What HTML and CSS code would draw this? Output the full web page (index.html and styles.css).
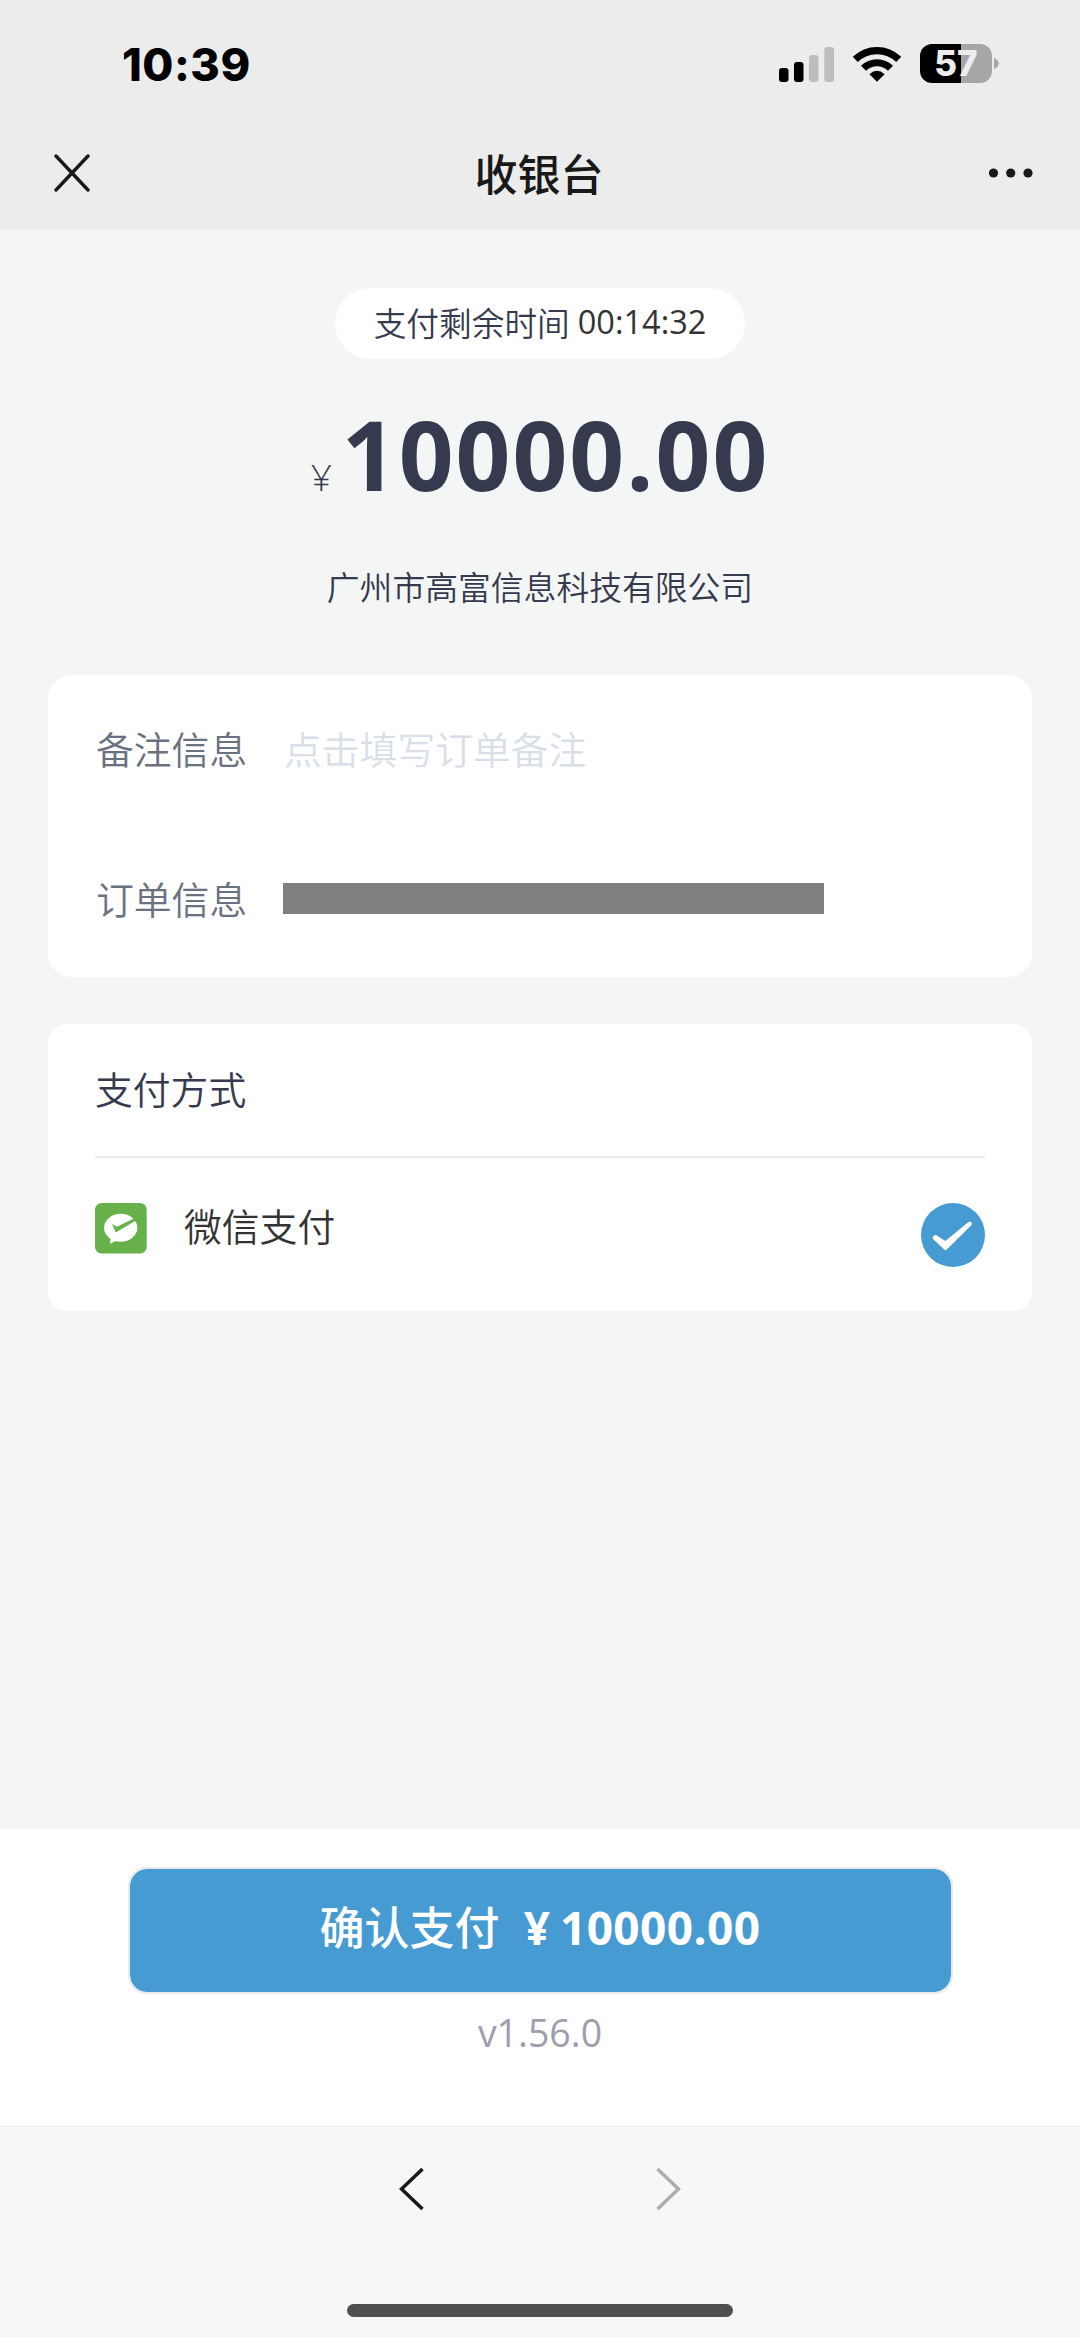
FILE: index.html
```html
<!DOCTYPE html>
<html lang="zh-CN">
<head>
<meta charset="utf-8">
<title>收银台</title>
<link rel="stylesheet" href="styles.css">
</head>
<body>
<div class="screen">
  <header class="header">
    <div class="status">
      <span class="clock">10:39</span>
      <div class="indicators">
        <svg class="signal" width="56" height="36" viewBox="0 0 56 36">
          <rect x="0" y="22" width="9.500" height="14" rx="3"/>
          <rect x="15" y="16" width="9.500" height="20" rx="3"/>
          <g fill="#bdbdbd"><rect x="30" y="9" width="9.500" height="27" rx="3"/><rect x="45.300" y="1" width="9.700" height="35" rx="3"/></g>
        </svg>
        <svg class="wifi" width="48" height="36" viewBox="0 0 48 36">
          <g fill="none" stroke="#000" stroke-width="7.200">
            <path d="M2.300 13.400A31 31 0 0 1 45.700 13.400"/>
            <path d="M10.500 22.300A19.200 19.200 0 0 1 37.500 22.300"/>
          </g>
          <path d="M24 35.700 16.400 28.300Q24 21.400 31.600 28.300Z"/>
        </svg>
        <div class="battery">
          <div class="battery-body">57</div>
          <svg width="5" height="11" viewBox="0 0 5 11"><path d="M0 0Q4.600 2 4.600 5.500T0 11Z" fill="#a6a6a6"/></svg>
        </div>
      </div>
    </div>
    <nav class="navbar">
      <svg width="36" height="38" viewBox="0 0 36 38"><path d="M2 2 34 36M34 2 2 36" stroke="#191919" stroke-width="3.400" stroke-linecap="round"/></svg>
      <h1 class="title">收银台</h1>
      <svg width="46" height="12" viewBox="0 0 46 12" fill="#191919"><circle cx="5.500" cy="6" r="4.600"/><circle cx="22.700" cy="6" r="4.600"/><circle cx="40" cy="6" r="4.600"/></svg>
    </nav>
  </header>

  <main class="content">
    <div class="timer"><span>支付剩余时间</span><span class="countdown">00:14:32</span></div>
    <div class="amount"><span class="currency">¥</span><span class="value">10000.00</span></div>
    <div class="merchant">广州市高富信息科技有限公司</div>

    <section class="card info">
      <div class="row"><span class="label">备注信息</span><span class="placeholder">点击填写订单备注</span></div>
      <div class="row"><span class="label">订单信息</span><span class="masked"></span></div>
    </section>

    <section class="card methods">
      <h2 class="methods-title">支付方式</h2>
      <div class="method">
        <svg class="wechat" width="52" height="51" viewBox="0 0 52 51">
          <rect width="51.700" height="50.500" rx="6.500" fill="#67b14b"/>
          <ellipse cx="25.700" cy="24.800" rx="16.600" ry="14" fill="#fff"/>
          <path d="M15.700 33 15 40.700 22 37.500Z" fill="#fff"/>
          <path d="M17 20.700 21.800 23.800 39.500 15.300 40.600 17.800 20.700 29.400Z" fill="#67b14b"/>
        </svg>
        <span class="method-name">微信支付</span>
        <svg width="64" height="64" viewBox="0 0 64 64">
          <circle cx="32" cy="32" r="32" fill="#469bd3"/>
          <path d="M14 32Q11 33.500 12 36L23.500 46.800Q24.500 47.600 25.800 46.500L50.500 22Q51.600 20.300 50 19Q48.800 18.200 47.500 19L24.300 38 15.500 32.200Q14.800 31.800 14 32Z" fill="#fff"/>
        </svg>
      </div>
    </section>
  </main>

  <footer class="checkout">
    <button class="pay"><span class="pay-label">确认支付</span><span class="pay-currency">¥</span><span class="pay-value">10000.00</span></button>
    <div class="version">v1.56.0</div>
  </footer>

  <div class="toolbar">
    <div class="history">
      <svg width="26" height="44" viewBox="0 0 26 44"><path d="M23.500 2 2.500 22 23.500 42" fill="none" stroke="#191919" stroke-width="3.600"/></svg>
      <svg width="26" height="44" viewBox="0 0 26 44"><path d="M2.500 2 23.500 22 2.500 42" fill="none" stroke="#adadad" stroke-width="3.600"/></svg>
    </div>
    <div class="home-bar"></div>
  </div>
</div>
</body>
</html>
```

FILE: styles.css
```css
* { box-sizing: border-box; margin: 0; padding: 0; }
body { background: #f4f6f6; font-family: "Noto Sans CJK SC", sans-serif; color: #363a4e; }
.screen { width: 1080px; height: 2337px; display: flex; flex-direction: column; overflow: hidden; }
svg { display: block; flex: none; }

.header { height: 229px; flex: none; background: #ececec; }
.status { height: 127px; padding: 0 81px 0 122px; display: flex; justify-content: space-between; align-items: center; }
.clock { font: 800 45px/45px Inter, sans-serif; color: #000; letter-spacing: .5px; padding-top: 2px; }
.indicators { display: flex; align-items: center; }
.signal { margin-right: 18px; }
.wifi { margin-right: 19px; }
.battery { display: flex; align-items: center; gap: 2px; }
.battery-body { width: 72px; height: 39px; border-radius: 12px; background: linear-gradient(90deg, #000 41px, #a6a6a6 41px); color: #ececec; font: 800 35px/39px Inter, sans-serif; text-align: center; }
.navbar { height: 92px; padding: 0 46px 0 54px; display: flex; justify-content: space-between; align-items: center; }
.title { font-size: 43px; line-height: 60px; padding-bottom: 3px; font-weight: 500; color: #191919; }

.content { flex: 1; padding: 59px 48px 0; display: flex; flex-direction: column; align-items: center; }
.timer { width: 410px; height: 71px; flex: none; border-radius: 36px; background: #fff; display: flex; justify-content: center; align-items: center; gap: 8px; font-size: 32.700px; line-height: 67px; padding-bottom: 4px; font-weight: 350; }
.countdown { font-family: "Open Sans", sans-serif; font-size: 32.500px; font-weight: 400; color: #333; }
.amount { height: 150px; margin-top: 20px; display: flex; align-items: baseline; gap: 10px; line-height: 150px; }
.currency { font: 300 37px/60px "Open Sans", sans-serif; }
.value { font: 700 96px/150px "Open Sans", sans-serif; letter-spacing: 2px; }
.merchant { margin-top: 27px; height: 60px; font-size: 32.800px; line-height: 60px; font-weight: 350; }

.card { width: 984px; background: #fff; flex: none; }
.info { margin-top: 59px; height: 302px; border-radius: 24px; padding: 0 48px; font-size: 37.800px; font-weight: 350; }
.row { height: 150px; display: flex; align-items: center; }
.label { width: 187px; color: #6a7180; padding-bottom: 5px; }
.placeholder { margin-left: 1px; color: #d8dfe8; padding-bottom: 5px; }
.masked { width: 541px; height: 31px; margin-bottom: 3px; background: #808080; }
.methods { margin-top: 47px; height: 287px; border-radius: 19px; padding: 0 47px; }
.methods-title { height: 134px; border-bottom: 2px solid #e9edf0; font-size: 37.800px; line-height: 127px; font-weight: 350; }
.method { display: flex; align-items: flex-start; padding-top: 45px; }
.method-name { flex: 1; margin-left: 37px; font-size: 37.800px; line-height: 43px; font-weight: 350; color: #333; }

.checkout { height: 297px; flex: none; background: #fff; padding-top: 38px; display: flex; flex-direction: column; align-items: center; }
.pay { width: 825px; height: 127px; border: 2px solid #e8eaed; border-radius: 19px; background: #469bd3; background-clip: padding-box; color: #fff; display: flex; align-items: baseline; justify-content: center; line-height: 113px; font-family: inherit; padding-bottom: 8px; }
.pay-label { font-size: 45px; font-weight: 500; }
.pay-currency { margin-left: 24px; font: 700 46px/60px "Open Sans", sans-serif; }
.pay-value { margin-left: 10px; font: 700 46px/60px "Open Sans", sans-serif; letter-spacing: .4px; }
.version { margin-top: 9px; font: 400 37.500px/60px "Open Sans", sans-serif; color: #9c9fab; }

.toolbar { height: 211px; flex: none; border-top: 1px solid #e9e9e9; background: #f7f7f7; padding-top: 40px; display: flex; flex-direction: column; align-items: center; }
.history { width: 282px; display: flex; justify-content: space-between; }
.home-bar { margin-top: 93px; width: 386px; height: 13px; border-radius: 7px; background: #4f4f4f; }
```
